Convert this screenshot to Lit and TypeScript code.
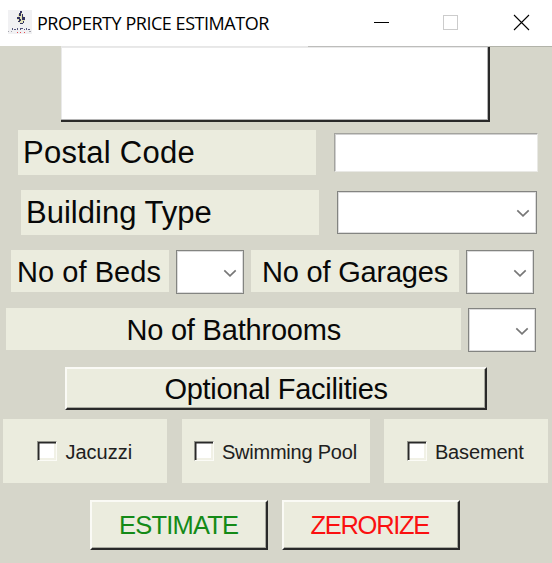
import { LitElement, html, css, svg } from "lit";
import { customElement, property } from "lit/decorators.js";

@customElement("combo-box")
class ComboBox extends LitElement {
  static styles = css`
    :host {
      display: flex;
      box-sizing: border-box;
      align-items: center;
      justify-content: flex-end;
      background: #fff;
      border: 1px solid #838481;
      box-shadow: inset 0 0 0 1px #dcdcdc;
      padding-right: 6px;
    }
    svg { display: block; margin-top: 2px; }
  `;
  render() {
    return html`<svg width="14" height="9" viewBox="0 0 14 9" fill="none" stroke="#777" stroke-width="1.7">
      <path d="M1.3 1.4 L7 6.8 L12.7 1.4" /></svg>`;
  }
}

@customElement("check-item")
class CheckItem extends LitElement {
  @property() label = "";
  static styles = css`
    :host {
      display: flex;
      box-sizing: border-box;
      align-items: center;
      background: #ebecde;
      height: 64px;
      font: 20px "Liberation Sans", Arial, sans-serif;
      color: #202020;
    }
    .box {
      box-sizing: border-box;
      width: 20px;
      height: 20px;
      background: #fff;
      border: 1px solid;
      border-color: #92938b #fbfbf6 #fbfbf6 #92938b;
      box-shadow: inset 1.5px 1.5px 0 #292929, inset -2px -2px 0 #f1f1e6;
    }
    .text { margin-left: 8px; white-space: nowrap; line-height: 24px; margin-top: 1px; }
  `;
  render() {
    return html`<div class="box"></div><div class="text">${this.label}</div>`;
  }
}

const emblem = svg`
  <rect width="24" height="24" fill="#f1f1f3" />
  <path d="M12.5 1 L10 5 L9 9 L11 13 L14 14 L17 10 L15 5Z" fill="#e3e1b9" />
  <path d="M12 1h2v2h-2zM11 3h2v3h-2zM14 4h1v3h-1zM9 7h3v2H9zM14 7h3v3h-3zM11 9h2v2h-2zM10 11h2v1h-2zM15 11h1v2h-1zM12 13h3v1h-3z" fill="#343460" />
  <path d="M4 18h1v2H4zM6 19h2v1H6zM9 18h1v2H9zM12 18h3v1h-3zM12 19h1v1h-1zM16 19h1v1h-1zM18 18h1v2h-1zM20 19h2v1h-2z" fill="#55557c" />
  <path d="M0 21h1v1H0zM3 21h1v1H3zM21 21h2v1h-2z" fill="#a5a5ad" />
  <path d="M9 22h1v1H9zM12 22h1v1h-1zM16 22h1v1h-1z" fill="#e34a50" />
`;

@customElement("app-root")
class AppRoot extends LitElement {
  static styles = css`
    :host {
      display: flex;
      flex-direction: column;
      width: 552px;
      height: 563px;
      overflow: hidden;
      background: #d6d6ca;
      color: #080808;
      font-family: "Liberation Sans", Arial, sans-serif;
    }
    .title-bar {
      display: flex;
      flex: none;
      box-sizing: border-box;
      height: 46px;
      background: #fff;
      padding: 10px 14px 0 8px;
    }
    .title {
      font: 18px/26px "Open Sans", "Noto Sans", sans-serif;
      margin-left: 5px;
      letter-spacing: -0.46px;
      white-space: nowrap;
      color: #000;
      width: 335px;
    }
    .controls { display: block; flex: none; }
    .edge {
      flex: none;
      height: 1px;
      background: linear-gradient(90deg, #d6d6ca 61px, #e7e7e7 61px, #e7e7e7 308px, #bdbdbb 308px, #bdbdbb 489px, #b2b3a9 489px);
    }
    .row { display: flex; flex: none; align-items: flex-start; }
    .raised {
      box-sizing: border-box;
      background: #ebecde;
      border: 2px solid;
      border-color: #fafaf5 #292929 #292929 #fafaf5;
      box-shadow: inset -1px -1px 0 #a9aaa0;
      white-space: nowrap;
    }
    .output {
      flex: none;
      box-sizing: border-box;
      width: 429px;
      height: 75px;
      margin-left: 61px;
      background: #fff;
      border: solid #292929;
      border-width: 0 2px 2px 0;
      box-shadow: inset -1px -1px 0 #b4b4b4, inset 1px 1px 0 #e9e9e9;
    }
    .label {
      box-sizing: border-box;
      background: #ebecde;
      white-space: nowrap;
    }
    .postal { padding: 8px 0 9px 18.4px; }
    .postal .label, .building .label {
      width: 297.5px;
      height: 45px;
      padding-left: 4.6px;
      font-size: 31px;
      line-height: 45px;
      letter-spacing: 0.3px;
    }
    .building .label { letter-spacing: 0.02px; }
    .field {
      box-sizing: border-box;
      width: 204px;
      height: 39px;
      margin: 3px 0 0 18px;
      background: #fff;
      border: 1px solid;
      border-color: #a3a39e #e9e9e5 #e9e9e5 #a3a39e;
      box-shadow: inset 1px 1px 0 #d0d0d0;
    }
    .building { padding: 6px 0 0 21.4px; }
    .wide { width: 200px; height: 43px; margin: 1px 0 0 18px; }
    .counts { padding: 15px 0 0 11px; }
    .counts .label, .baths .label { height: 42px; font-size: 29px; line-height: 44px; }
    .beds { width: 158px; padding-left: 6px; letter-spacing: 0.05px; }
    .garages { width: 208px; margin-left: 7px; padding-left: 11px; letter-spacing: -0.2px; }
    .small { width: 68px; height: 44px; margin-left: 7px; }
    .baths { padding: 14px 0 0 6.4px; }
    .baths .label { width: 455px; padding-left: 120px; letter-spacing: -0.2px; }
    .optional {
      flex: none;
      width: 422px;
      height: 43px;
      margin: 15px 0 0 65px;
      padding-left: 97.5px;
      font-size: 29px;
      line-height: 40px;
      letter-spacing: -0.3px;
    }
    .checks { padding: 9px 0 0 3.4px; }
    .jacuzzi { width: 164px; padding-left: 34px; }
    .pool { width: 188px; margin-left: 14.5px; padding-left: 12px; letter-spacing: -0.22px; }
    .basement { width: 164px; margin-left: 14.5px; padding-left: 22.5px; letter-spacing: -0.15px; }
    .actions { padding: 17px 0 0 90px; gap: 14px; }
    .action { width: 178px; height: 50px; font-size: 25.5px; line-height: 46px; }
    .estimate { color: #148a17; padding-left: 27px; letter-spacing: -0.8px; }
    .zerorize { color: #fb1010; padding-left: 26.5px; letter-spacing: -1.3px; }
  `;
  render() {
    return html`
      <div class="title-bar">
        <svg width="24" height="24" viewBox="0 0 24 24" shape-rendering="crispEdges">${emblem}</svg>
        <div class="title">PROPERTY PRICE ESTIMATOR</div>
        <svg class="controls" width="160" height="26" viewBox="0 0 160 26" fill="none">
          <path d="M2 12.5H17" stroke="#000" />
          <rect x="71.5" y="5.5" width="14" height="14" stroke="#ccc" />
          <path d="M142 5 L157 20 M157 5 L142 20" stroke="#000" stroke-width="1.1" />
        </svg>
      </div>
      <div class="edge"></div>
      <div class="output"></div>
      <div class="row postal">
        <div class="label">Postal Code</div>
        <div class="field"></div>
      </div>
      <div class="row building">
        <div class="label">Building Type</div>
        <combo-box class="wide"></combo-box>
      </div>
      <div class="row counts">
        <div class="label beds">No of Beds</div>
        <combo-box class="small"></combo-box>
        <div class="label garages">No of Garages</div>
        <combo-box class="small"></combo-box>
      </div>
      <div class="row baths">
        <div class="label">No of Bathrooms</div>
        <combo-box class="small"></combo-box>
      </div>
      <div class="raised optional">Optional Facilities</div>
      <div class="row checks">
        <check-item class="jacuzzi" label="Jacuzzi"></check-item>
        <check-item class="pool" label="Swimming Pool"></check-item>
        <check-item class="basement" label="Basement"></check-item>
      </div>
      <div class="row actions">
        <div class="raised action estimate">ESTIMATE</div>
        <div class="raised action zerorize">ZERORIZE</div>
      </div>
    `;
  }
}
